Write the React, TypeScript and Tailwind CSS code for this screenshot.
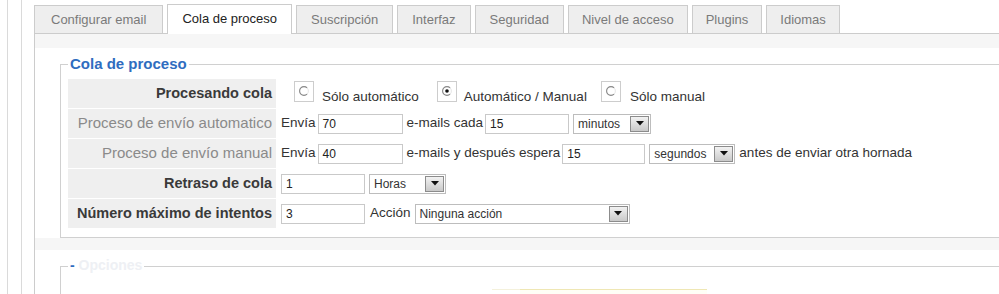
import React from "react";

const tabs = [
  "Configurar email",
  "Cola de proceso",
  "Suscripción",
  "Interfaz",
  "Seguridad",
  "Nivel de acceso",
  "Plugins",
  "Idiomas",
];

function Radio({ checked }: { checked?: boolean }) {
  return (
    <span className="w-[20px] h-[21px] border border-[#cdcdcd] bg-white flex justify-center pt-[3px] shrink-0">
      <svg width="12" height="12" viewBox="0 0 12 12">
        <circle cx="6" cy="6" r="4.4" fill="white" stroke="#e6e6e6" strokeWidth="1" />
        <path d="M 9.1 2.9 A 4.4 4.4 0 1 0 9.1 9.1" fill="none" stroke="#8a8a8a" strokeWidth="1.1" />
        {checked && <circle cx="6" cy="6" r="1.8" fill="#111" />}
      </svg>
    </span>
  );
}

function Input({ value, w }: { value: string; w: string }) {
  return (
    <div
      className={`${w} h-[20px] border border-[#c9c9c9] bg-white pl-[4px] text-[12px] text-[#222] flex items-center shrink-0`}
    >
      {value}
    </div>
  );
}

function Select({ value, w }: { value: string; w: string }) {
  return (
    <div
      className={`${w} h-[20px] border border-[#bdbdbd] bg-white flex items-center pl-[4px] pr-[1px] text-[12px] text-[#333] shrink-0`}
    >
      <span className="flex-1">{value}</span>
      <span className="w-[19px] h-[16px] border border-[#8c8c8c] bg-gradient-to-b from-[#f2f2f2] to-[#c9c9c9] flex items-center justify-center">
        <svg width="8" height="5" viewBox="0 0 8 5">
          <path d="M0 0 H8 L4 4.5 Z" fill="#111" />
        </svg>
      </span>
    </div>
  );
}

function Row({
  label,
  muted,
  children,
}: {
  label: string;
  muted?: boolean;
  children: React.ReactNode;
}) {
  return (
    <div className="flex h-[29px] shrink-0">
      <div
        className={`w-[208px] bg-[#efefef] flex items-center justify-end pr-[4px] shrink-0 whitespace-nowrap ${
          muted ? "text-[15px] text-[#8a8a8a]" : "text-[14.5px] font-bold text-[#3a3a3a]"
        }`}
      >
        {label}
      </div>
      <div className="flex items-center pl-[5px] text-[13.5px] text-[#333] whitespace-nowrap">
        {children}
      </div>
    </div>
  );
}

export default function App() {
  return (
    <div className="w-[999px] h-[294px] overflow-hidden bg-white flex font-['Liberation_Sans',Arial,sans-serif]">
      <div className="ml-[7px] border-l border-[#dadada] pl-[13px] flex-1 flex">
        <div className="border-l border-[#dadada] pl-[12px] flex-1 flex flex-col min-w-0">
          {/* Tabs */}
          <div className="flex items-end gap-[4px] h-[33px] shrink-0 relative z-10">
            {tabs.map((t, i) =>
              i === 1 ? (
                <div
                  key={t}
                  className="h-[30px] mb-[-1px] px-[14px] border border-b-0 border-[#cccccc] bg-white flex items-center text-[13px] text-[#222] pb-[1px]"
                >
                  {t}
                </div>
              ) : (
                <div
                  key={t}
                  className={`h-[28px] border border-b-0 border-[#cccccc] bg-[#eeeeee] flex items-center text-[13px] text-[#7a7a7a] ${
                    i === 0 ? "px-[16px]" : i >= 5 ? "px-[13px]" : "px-[14px]"
                  }`}
                >
                  {t}
                </div>
              )
            )}
          </div>
          {/* Panel */}
          <div className="flex-1 shrink-0 border-l border-t border-[#cccccc] bg-[#f6f6f6] pt-[14px]">
            {/* Section 1 */}
            <div className="bg-white pt-[16px] pl-[25px]">
              <div className="relative border border-r-0 border-[#d0d0d0] pl-[7px] pt-[14px] pb-[9px]">
                <div className="absolute left-[7px] top-[-10px] bg-white px-[2px] text-[15px] leading-[17px] font-bold text-[#2f6dbf]">
                  Cola de proceso
                </div>
                <div className="flex flex-col gap-[1px]">
                  <Row label="Procesando cola">
                    <div className="flex items-end ml-[13px] self-start mt-[2px]">
                      <Radio />
                      <span className="ml-[8px] mr-[18px] leading-[15px] mb-[-2px]">Sólo automático</span>
                      <Radio checked />
                      <span className="ml-[7px] mr-[14px] leading-[15px] mb-[-2px]">Automático / Manual</span>
                      <Radio />
                      <span className="ml-[9px] leading-[15px] mb-[-2px]">Sólo manual</span>
                    </div>
                  </Row>
                  <Row label="Proceso de envío automatico" muted>
                    <span>Envía</span>
                    <span className="ml-[2px]"><Input value="70" w="w-[85px]" /></span>
                    <span className="ml-[4px]">e-mails cada</span>
                    <span className="ml-[2px]"><Input value="15" w="w-[84px]" /></span>
                    <span className="ml-[4px]"><Select value="minutos" w="w-[78px]" /></span>
                  </Row>
                  <Row label="Proceso de envío manual" muted>
                    <span>Envía</span>
                    <span className="ml-[2px]"><Input value="40" w="w-[85px]" /></span>
                    <span className="ml-[4px]">e-mails y después espera</span>
                    <span className="ml-[2px]"><Input value="15" w="w-[83px]" /></span>
                    <span className="ml-[4px]"><Select value="segundos" w="w-[86px]" /></span>
                    <span className="ml-[4px]">antes de enviar otra hornada</span>
                  </Row>
                  <Row label="Retraso de cola">
                    <Input value="1" w="w-[84px]" />
                    <span className="ml-[4px]"><Select value="Horas" w="w-[77px]" /></span>
                  </Row>
                  <Row label="Número máximo de intentos">
                    <Input value="3" w="w-[84px]" />
                    <span className="ml-[5px]">Acción</span>
                    <span className="ml-[4px]"><Select value="Ninguna acción" w="w-[215px]" /></span>
                  </Row>
                </div>
              </div>
            </div>
            {/* Section 2 */}
            <div className="bg-white pt-[16px] pl-[25px] mt-[12px] h-[60px]">
              <div className="relative border-l border-t border-[#d0d0d0] pl-[7px] h-full">
                <div className="absolute left-[7px] top-[-10px] bg-white px-[2px] text-[14px] leading-[17px] font-bold text-[#eef0f4]">
                  <span className="text-[#2f6dbf]">-</span> Opciones
                </div>
                <div className="flex pt-[22px] ml-[424px]">
                  <div className="w-[28px] border-t border-[#f4f1dc]" />
                  <div className="w-[187px] h-[10px] border-t border-[#efe7b4] bg-[#fffef6]" />
                </div>
              </div>
            </div>
          </div>
        </div>
      </div>
    </div>
  );
}
